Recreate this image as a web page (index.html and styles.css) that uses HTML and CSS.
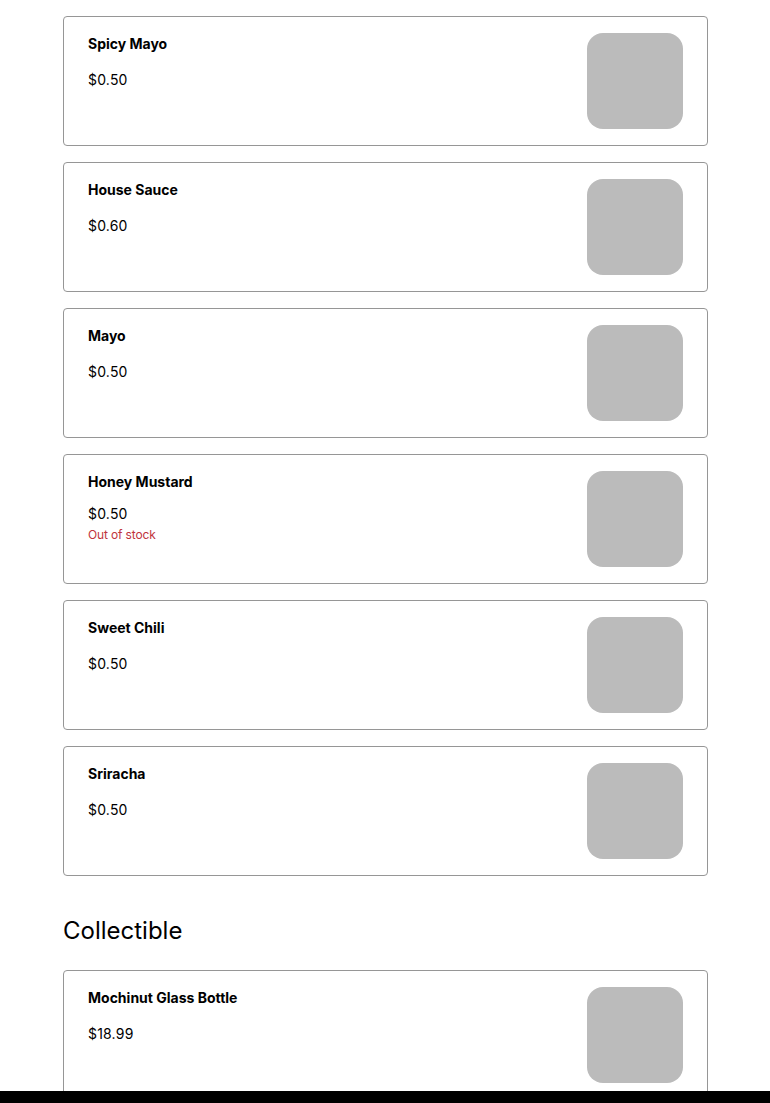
FILE: index.html
```html
<!DOCTYPE html>
<html lang="en">
<head>
<meta charset="utf-8">
<title>Menu</title>
<link rel="stylesheet" href="styles.css">
</head>
<body>
<main class="menu">
  <section class="group">
    <article class="card">
      <div class="info">
        <h3 class="name">Spicy Mayo</h3>
        <div class="meta"><p class="price">$0.50</p></div>
      </div>
      <div class="thumb"></div>
    </article>
    <article class="card">
      <div class="info">
        <h3 class="name">House Sauce</h3>
        <div class="meta"><p class="price">$0.60</p></div>
      </div>
      <div class="thumb"></div>
    </article>
    <article class="card">
      <div class="info">
        <h3 class="name">Mayo</h3>
        <div class="meta"><p class="price">$0.50</p></div>
      </div>
      <div class="thumb"></div>
    </article>
    <article class="card">
      <div class="info">
        <h3 class="name">Honey Mustard</h3>
        <div class="meta"><p class="price">$0.50</p><p class="stock">Out of stock</p></div>
      </div>
      <div class="thumb"></div>
    </article>
    <article class="card">
      <div class="info">
        <h3 class="name">Sweet Chili</h3>
        <div class="meta"><p class="price">$0.50</p></div>
      </div>
      <div class="thumb"></div>
    </article>
    <article class="card">
      <div class="info">
        <h3 class="name">Sriracha</h3>
        <div class="meta"><p class="price">$0.50</p></div>
      </div>
      <div class="thumb"></div>
    </article>
  </section>
  <section class="group">
    <h2 class="group-title">Collectible</h2>
    <article class="card">
      <div class="info">
        <h3 class="name">Mochinut Glass Bottle</h3>
        <div class="meta"><p class="price">$18.99</p></div>
      </div>
      <div class="thumb"></div>
    </article>
  </section>
</main>
<div class="bottom-bar"></div>
</body>
</html>
```
FILE: styles.css
```css
* { box-sizing: border-box; }
html, body { margin: 0; padding: 0; background: #fff; }
body {
  font-family: Inter, "Noto Sans", "Liberation Sans", sans-serif;
  color: #000;
}
.menu {
  width: 645px;
  margin-left: 63px;
  padding-top: 16px;
  display: flex;
  flex-direction: column;
}
.group {
  display: flex;
  flex-direction: column;
  gap: 16px;
}
.group + .group { margin-top: 16px; }
.group-title {
  margin: 24px 0 8px;
  font-size: 24px;
  font-weight: 400;
  line-height: 30px;
}
.card {
  display: flex;
  justify-content: space-between;
  align-items: flex-start;
  border: 1px solid #969696;
  border-radius: 4px;
  padding: 16px 24px;
}
.info {
  display: flex;
  flex-direction: column;
}
.name {
  margin: 0;
  font-size: 14px;
  font-weight: 650;
  line-height: 22px;
}
.meta {
  margin-top: 10px;
  min-height: 30px;
  display: flex;
  flex-direction: column;
  justify-content: center;
}
.price {
  margin: 0;
  font-size: 14px;
  font-weight: 400;
  line-height: 22px;
  letter-spacing: 0.2px;
}
.stock {
  margin: 2px 0 0;
  font-size: 12px;
  line-height: 16px;
  letter-spacing: -0.15px;
  color: #c0343c;
}
.thumb {
  width: 96px;
  height: 96px;
  border-radius: 16px;
  background: #bbbbbb;
  flex: none;
}
.bottom-bar {
  position: fixed;
  left: 0;
  right: 0;
  bottom: 0;
  height: 12px;
  background: #000;
}
```
